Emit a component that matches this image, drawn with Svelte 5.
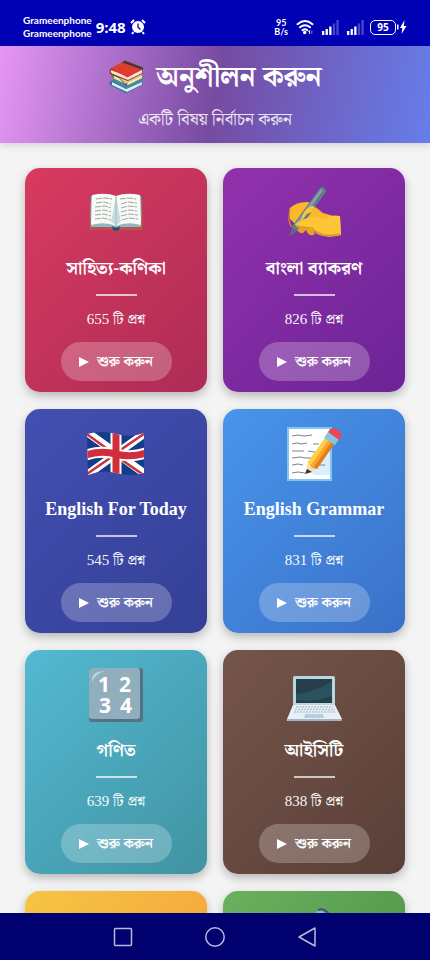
<script>
  const subjects = [
    { title: 'সাহিত্য-কণিকা', count: 655, icon: 'book', from: '#d93a60', to: '#ad2c56' },
    { title: 'বাংলা ব্যাকরণ', count: 826, icon: 'writing', from: '#9232ac', to: '#6c2396' },
    { title: 'English For Today', count: 545, icon: 'flag', from: '#4250b2', to: '#343f95' },
    { title: 'English Grammar', count: 831, icon: 'memo', from: '#4895ec', to: '#3b71c8' },
    { title: 'গণিত', count: 639, icon: 'numbers', from: '#53b9d2', to: '#4193a2' },
    { title: 'আইসিটি', count: 838, icon: 'laptop', from: '#76554a', to: '#593f38' },
    { icon: 'none', from: '#f6c544', to: '#f39237' },
    { icon: 'microscope', from: '#6ab15e', to: '#43863f' }
  ];
</script>

<div class="screen">
  <div class="status">
    <div class="carriers"><span>Grameenphone</span><span>Grameenphone</span></div>
    <span class="time">9:48</span>
    <svg class="alarm" viewBox="0 0 16 16" width="16" height="16" fill="none" stroke="#fff">
      <path d="M1 4 4 1M15 4 12 1M3.500 13 2 15M12.500 13 14 15" stroke-width="2" />
      <circle cx="8" cy="8" r="6" fill="#fff" stroke="none" />
      <path d="M8 4.500V8.300L10.500 10.500" stroke="#0000b4" stroke-width="1.300" />
    </svg>
    <div class="speed"><span>95</span><span>B/s</span></div>
    <svg class="wifi" viewBox="0 0 18 16" width="18" height="16" fill="none" stroke="#fff" stroke-width="1.900" stroke-linecap="round">
      <path d="M1.500 5.200Q9-1.200 16.500 5.200M4 8.300Q9 4 14 8.300M6.500 11.200Q9 9.200 11.300 11.200" />
      <circle cx="8.700" cy="13.600" r=".8" fill="#fff" />
      <path d="M13.500 12v2.500M12.800 12.500l.7-.7" stroke-width="1" />
      <path d="M15.800 12v2.500" stroke-width="1" opacity=".5" />
    </svg>
    {#each [0, 1] as n (n)}
      <svg class="signal" viewBox="0 0 17 15" width="17" height="15" fill="#fff">
        <path d="M0 11h2.300v4H0zM3.600 9h2.300v6H3.600zM7.200 6.500h2.300V15H7.200z" />
        <path d="M10.800 3.500h2.300V15h-2.300zM14.400 0h2.300v15h-2.300z" opacity=".28" />
      </svg>
    {/each}
    <div class="battery">95</div>
    <svg class="bolt" viewBox="0 0 10 14" width="10" height="14" fill="#fff">
      <path d="M0 4.500h1.500v5H0zM7.500 0 3 8h2.300L4.600 14 9.500 6H6.800z" />
    </svg>
  </div>

  <header>
    <h1>
      <svg viewBox="0 0 36 36" width="36" height="36" aria-hidden="true">
        <path d="M2 26 18 34.500 35 25.500 34 22 18 27 5 21Q0 23 2 26" fill="#3c6f99" />
        <path d="m4 23 14 7 16-7v2.500L19 33 4 26z" fill="#d9edf4" />
        <path d="m4 21 14-6 17 7-17 8z" fill="#4588b5" />
        <path d="M4 19 20 27 35 20 34 15.500 6 14Q2 16 4 19" fill="#5d8e45" />
        <path d="m6 17 14 6 14-7v3l-14 7-14-6.500z" fill="#f1eac6" />
        <path d="m5 12 13 15 4-8L10 9z" fill="#5d4639" />
        <path d="m11 18 6 7 17-8-2-4z" fill="#d5c58b" />
        <path d="M3 9Q0 13 3 15.500L20 22 34.500 14.500V12L17 14z" fill="#9f2923" />
        <path d="m3 11 16.500 6.500L34 11v3l-14 7L4 14.500Q2 13 3 11" fill="#f5e7d4" />
        <path d="M3 9.500 15 2.500 35 10 19.500 18.500z" fill="#df3c2d" />
        <path d="M14 3.500 17 1.500 35 8.500V11z" fill="#51352f" />
      </svg>
      <span>অনুশীলন করুন</span>
    </h1>
    <p>একটি বিষয় নির্বাচন করুন</p>
  </header>

  <main>
    {#each subjects as s (s.icon)}
      <article style="--from: {s.from}; --to: {s.to}">
        <svg class="icon" viewBox="0 0 56 56" width="56" height="56" aria-hidden="true">
          {#if s.icon === 'book'}
            <path d="M2 10h52l1 34H33q-5 3-10 0H1z" fill="#bd5148" />
            <path d="M3 10Q2 26 3 41h22q3 3 6 0h22q1-15 0-31z" fill="#89b9c9" />
            <path d="M24 40q4 3 8 0l-1 4q-3 2-6 0z" fill="#2c4d72" />
            <path d="M4 9Q18 6 28 10v30Q17 35 3 39zM28 10Q38 6 52 9l1 30Q39 35 28 40z" fill="#f8faf7" />
            <path d="M28 10v30q-2-3-5-4 3-15 5-26M28 10v30q2-3 5-4-3-15-5-26" fill="#c9dde2" />
            <path d="M28 10v30" stroke="#9db9c2" />
            <path d="m8 13 9-1 7 1M8 17l8-1 7 2M7 21l10-1 6 2M7 25l9-1 7 2M7 29l9-1 7 2M7 33l8-1 8 2M32 13l8-1 8 1M33 18l7-2 9 1M33 22l7-2 9 1M33 26l8-2 8 1M33 30l8-2 9 1M34 34l7-2 9 1" fill="none" stroke="#9b9690" stroke-width=".9" stroke-dasharray="6 1" />
          {:else if s.icon === 'writing'}
            <path d="M4 22Q10 16 21 16q5 0 7 4l9 7 17 5 1 17q-14 4-24-1l-6-6q-12 1-21-9-1-6 0-11" fill="#f9b82b" />
            <path d="M10 41q2 7 7 6l3-3q3 8 9 4l-3-7-14-2z" fill="#e9a128" />
            <path d="m4 22-1 10q0 6 3 9" fill="none" stroke="#d68a20" stroke-width="1.300" />
            <path d="M4 50 7 39 34 2q2-2 4 0 3 2 1 5L14 42z" fill="#5f7d8d" />
            <path d="M9 38 35 3l2 1-25 36z" fill="#83a2af" />
            <path d="M17 28Q22 19 28 20q1 5-7 8l-7 9z" fill="#fcc536" />
            <path d="M9 38Q16 33 25 31q8-1 15 3 4-6 14-4l1 19Q40 52 31 47q-6-5-14-5-6 1-8-4" fill="#fcc536" />
            <path d="M10 40q9 2 16 2 4 5 12 7 8 1 16-1" fill="none" stroke="#dd9426" stroke-width="1.300" />
            <path d="m4 50 2-8 5 3z" fill="#566d7b" />
          {:else if s.icon === 'flag'}
            <clipPath id="flag-shape"><path d="M-1 7Q13 3 28 7t28-1v40q-14 4-28 0t-28 2z" /></clipPath>
            <g clip-path="url(#flag-shape)">
              <path d="M-2 0h60v56H-2z" fill="#143c88" />
              <path d="m-4 3 64 46M-4 50 60 4" stroke="#fff" stroke-width="8" />
              <path d="m-4 5 29 21M31 31l29 20M-4 49l29-20M31 24 60 4" stroke="#c8323c" stroke-width="2.500" />
              <path d="M28 0v56M-2 28Q13 23 28 27t30-1" fill="none" stroke="#fff" stroke-width="11" />
              <path d="M28 0v56M-2 28Q13 23 28 27t30-1" fill="none" stroke="#d02e3b" stroke-width="7" />
            </g>
          {:else if s.icon === 'memo'}
            <path d="M1 0h45v54H1z" fill="#83c5f1" />
            <path d="M3 2h41v50H3z" fill="#fff" />
            <path d="M44 22v26H29q-6-3-4-8z" fill="#d9effb" />
            <path d="m6 9 6-1 6 1 8-1M6 17l5-1 4 1 6-1M27 17h6M6 24h12M22 24l7 1M6 31l8-1 6 1h6M6 38l6-1 5 1M6 46l6-1 7 1M31 38h8" fill="none" stroke="#7c838a" />
            <path d="m19 47 3-12 6 4 3 3z" fill="#f7deb3" />
            <path d="m19 47 2-5 5 3z" fill="#303438" />
            <path d="m22 35 18-25 9 6-18 26-5-1z" fill="#f8a927" />
            <path d="m22 35 18-25 3 2-18 26z" fill="#ffd04b" />
            <path d="m46 14 3 2-18 26-3-2z" fill="#e17d26" />
            <path d="m38 11 4-6 11 7-4 6z" fill="#86c5df" />
            <path d="m42 5 2-3q3-2 8 1 5 4 3 7l-2 3z" fill="#ea4753" />
          {:else if s.icon === 'numbers'}
            <rect x="1" y="0" width="54" height="54" rx="3" fill="#527386" />
            <rect x="1" y="0" width="51" height="51" rx="3" fill="#91aebd" />
            <path d="M4 14Q3 3 17 3q-9 2-13 11" fill="#bdd6df" />
            <text x="16" y="24">1</text><text x="37" y="24">2</text>
            <text x="17" y="45">3</text><text x="38" y="45">4</text>
          {:else if s.icon === 'laptop'}
            <path d="M7 10q0-2 2-2h38q2 0 2 2v28H7z" fill="#b9d6e2" />
            <path d="M10 11h36v24H10z" fill="#263d4a" />
            <path d="M10 26Q28 24 46 14v14q-18 7-36 4z" fill="#2e6071" opacity=".6" />
            <path d="M7 37h42l7 14q0 2-2 2H3q-3 0-2-2z" fill="#e8f0f5" />
            <path d="M1 51h55q0 2-3 2H4q-3 0-3-2" fill="#9cb8c7" />
            <path d="M10 39h37M9 41.500h40M8 44h42" stroke="#b4c5cf" stroke-width="1.400" stroke-dasharray="2 1" />
            <path d="M19 46h18l1 4H18z" fill="#b5cedc" />
          {:else if s.icon === 'microscope'}
            <path d="M30 3q5-4 10 2l3 6-10 5z" fill="#8fb2e4" />
            <path d="m32 1 3-1q6 1 8 6" fill="none" stroke="#435374" stroke-width="2" />
            <path d="m31 14 9-4 7 20-9 4zM12 48h34v5H12z" fill="#8ca5b2" />
          {/if}
        </svg>
        {#if s.title}
          <h2>{s.title}</h2>
          <div class="rule"></div>
          <p>{s.count} টি প্রশ্ন</p>
          <button type="button">
            <svg viewBox="0 0 10 10" width="10" height="10" aria-hidden="true"><path d="M0 0 10 5 0 10z" fill="#fff" /></svg>
            শুরু করুন
          </button>
        {/if}
      </article>
    {/each}
  </main>

  <nav>
    <button type="button" aria-label="Recent apps"><svg viewBox="0 0 20 20" width="20" height="20"><rect x="1.500" y="1.500" width="17" height="17" rx="1" /></svg></button>
    <button type="button" aria-label="Home"><svg viewBox="0 0 20 20" width="20" height="20"><circle cx="10" cy="10" r="9.200" /></svg></button>
    <button type="button" aria-label="Back"><svg viewBox="0 0 20 20" width="20" height="20"><path d="M18 1v18L2 10z" /></svg></button>
  </nav>
</div>

<style>
  :global(body) { margin: 0; }
  .screen {
    height: 100vh;
    display: flex;
    flex-direction: column;
    overflow: hidden;
    background: #f4f4f4;
    color: #fff;
    font-family: "Liberation Serif", "Noto Serif Bengali", "Noto Sans Bengali", serif;
  }
  .status {
    flex: none;
    box-sizing: border-box;
    height: 46px;
    padding: 8px 23px 0;
    display: flex;
    align-items: center;
    background: #0000b4;
    font-family: "Open Sans", sans-serif;
    font-weight: 700;
  }
  .carriers { display: flex; flex-direction: column; font-family: Lato, sans-serif; font-size: 10px; line-height: 13px; }
  .time { margin-left: 4px; font-size: 15px; }
  .alarm { margin-left: 4px; }
  .speed { margin-left: auto; display: flex; flex-direction: column; align-items: center; font-family: Lato, sans-serif; font-size: 9px; line-height: 9px; }
  .wifi { margin-left: 8px; }
  .signal { margin-left: 8px; }
  .battery {
    box-sizing: border-box;
    width: 26px;
    height: 15px;
    margin: 0 1px 0 6px;
    border: 1px solid #fff;
    border-radius: 5px;
    font-size: 10px;
    line-height: 13px;
    text-align: center;
  }
  header {
    flex: none;
    box-sizing: border-box;
    height: 97px;
    padding-top: 10px;
    text-align: center;
    background: linear-gradient(100deg, #e696f5 0%, #764ba2 50%, #667eea 100%);
    box-shadow: 0 2px 8px rgba(0, 0, 0, 0.15);
  }
  h1 {
    margin: 0;
    display: flex;
    justify-content: center;
    align-items: center;
    gap: 12px;
    font-size: 28px;
    line-height: 42px;
  }
  header p { margin: 10px 0 0; font-size: 17px; line-height: 24px; opacity: 0.85; }
  main {
    flex: 1;
    min-height: 0;
    overflow: hidden;
    padding: 25px 25px 0;
    display: grid;
    grid-template-columns: 1fr 1fr;
    grid-auto-rows: 224px;
    gap: 17px 16px;
  }
  article {
    box-sizing: border-box;
    padding-top: 18px;
    display: flex;
    flex-direction: column;
    align-items: center;
    border-radius: 15px;
    background: linear-gradient(135deg, var(--from), var(--to));
    box-shadow: 0 4px 10px rgba(0, 0, 0, 0.25);
  }
  .icon { flex: none; overflow: visible; }
  .icon text { font: 700 21px "Noto Sans", sans-serif; fill: #fff; text-anchor: middle; }
  h2 { margin: 12px 0; font-size: 18px; line-height: 28px; white-space: nowrap; }
  .rule { width: 41px; height: 2px; background: rgba(255, 255, 255, 0.7); }
  article p { margin: 12px 0; font-size: 15px; line-height: 22px; opacity: 0.95; }
  article button {
    flex: none;
    width: 111px;
    height: 39px;
    padding: 0;
    display: flex;
    align-items: center;
    justify-content: center;
    gap: 8px;
    border: 0;
    border-radius: 20px;
    background: rgba(255, 255, 255, 0.24);
    color: #fff;
    font: inherit;
    font-size: 14px;
    font-weight: 700;
    white-space: nowrap;
  }
  nav {
    flex: none;
    height: 47px;
    display: flex;
    justify-content: center;
    align-items: center;
    gap: 72px;
    background: #00006e;
    position: relative;
  }
  nav button { padding: 0; border: 0; width: 20px; height: 20px; background: none; }
  nav svg { display: block; fill: none; stroke: #b9b9db; stroke-width: 1.500; stroke-linejoin: round; }
</style>
